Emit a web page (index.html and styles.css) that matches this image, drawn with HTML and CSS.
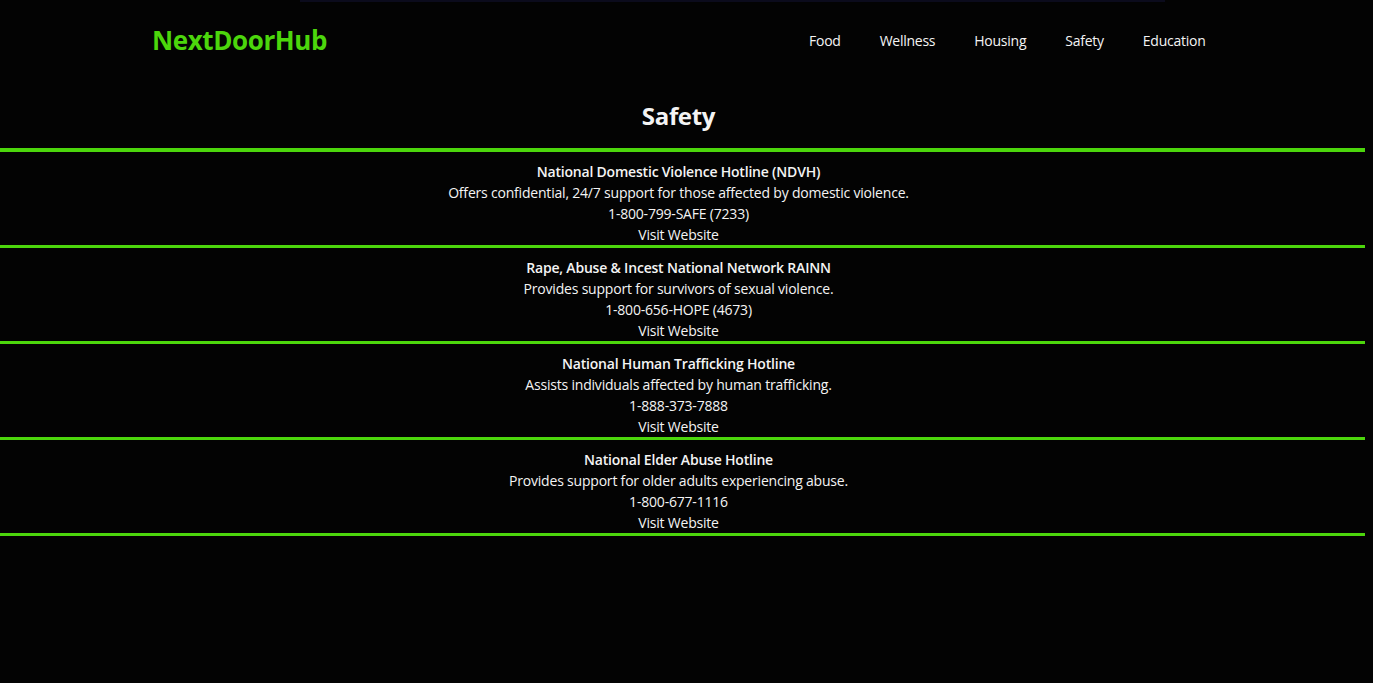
FILE: index.html
```html
<!DOCTYPE html>
<html>

<head>
  <title>NextDoorHub - Safety</title>
  <link rel="stylesheet" href="styles.css">
</head>

<body>
  <div class="top-strip"></div>

  <header class="site-header">
    <a class="logo" href="#">NextDoorHub</a>
    <nav class="main-nav">
      <a href="#">Food</a>
      <a href="#">Wellness</a>
      <a href="#">Housing</a>
      <a href="#">Safety</a>
      <a href="#">Education</a>
    </nav>
  </header>

  <main>
    <h1 class="page-title">Safety</h1>

    <div class="resource-list">
      <div class="resource">
        <p class="resource-name">National Domestic Violence Hotline (NDVH)</p>
        <p>Offers confidential, 24/7 support for those affected by domestic violence.</p>
        <p>1-800-799-SAFE (7233)</p>
        <p><a href="#">Visit Website</a></p>
      </div>

      <div class="resource">
        <p class="resource-name">Rape, Abuse &amp; Incest National Network RAINN</p>
        <p>Provides support for survivors of sexual violence.</p>
        <p>1-800-656-HOPE (4673)</p>
        <p><a href="#">Visit Website</a></p>
      </div>

      <div class="resource">
        <p class="resource-name">National Human Trafficking Hotline</p>
        <p>Assists individuals affected by human trafficking.</p>
        <p>1-888-373-7888</p>
        <p><a href="#">Visit Website</a></p>
      </div>

      <div class="resource">
        <p class="resource-name">National Elder Abuse Hotline</p>
        <p>Provides support for older adults experiencing abuse.</p>
        <p>1-800-677-1116</p>
        <p><a href="#">Visit Website</a></p>
      </div>
    </div>
  </main>
</body>

</html>
```

FILE: styles.css
```css
body {
  margin: 0;
  font-family: "Open Sans", "Noto Sans", sans-serif;
  background-color: #030303;
  color: #f4f4f4;
}

a {
  color: inherit;
  text-decoration: none;
}

.top-strip {
  position: absolute;
  top: 0;
  left: 300px;
  width: 865px;
  height: 2px;
  background-color: #0b0b1c;
}

.site-header {
  display: flex;
  justify-content: space-between;
  align-items: center;
  height: 80px;
  padding: 0 148px 0 152px;
}

.logo {
  color: #4cd60c;
  font-size: 26px;
  font-weight: bold;
  letter-spacing: -0.4px;
}

.main-nav {
  display: flex;
}

.main-nav a {
  padding: 0 19.5px;
  font-size: 14px;
  letter-spacing: -0.25px;
}

main {
  margin-right: 8px;
}

.page-title {
  margin: 21px 0 17px;
  padding-right: 8px;
  font-size: 24px;
  line-height: 30px;
  text-align: center;
  letter-spacing: -0.3px;
}

.resource-list {
  border-top: 4px solid #4cd60c;
}

.resource {
  padding: 9px 8px 0 0;
  border-bottom: 3px solid #4cd60c;
  text-align: center;
  font-size: 14px;
  line-height: 21px;
  letter-spacing: -0.2px;
}

.resource p {
  margin: 0;
}

.resource-name {
  font-weight: 600;
}
```
